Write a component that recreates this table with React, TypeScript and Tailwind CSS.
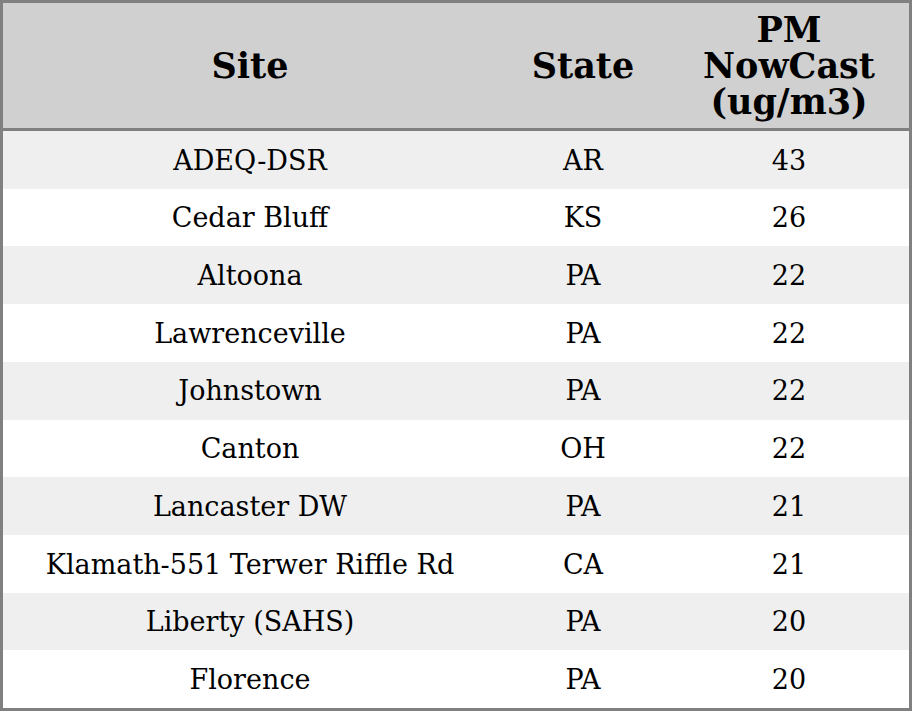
import React from "react";

const rows: [string, string, string][] = [
  ["ADEQ-DSR", "AR", "43"],
  ["Cedar Bluff", "KS", "26"],
  ["Altoona", "PA", "22"],
  ["Lawrenceville", "PA", "22"],
  ["Johnstown", "PA", "22"],
  ["Canton", "OH", "22"],
  ["Lancaster DW", "PA", "21"],
  ["Klamath-551 Terwer Riffle Rd", "CA", "21"],
  ["Liberty (SAHS)", "PA", "20"],
  ["Florence", "PA", "20"],
];

export default function App() {
  return (
    <div
      className="w-[912px] h-[711px] bg-white text-black"
      style={{ fontFamily: '"DejaVu Serif", serif' }}
    >
      <div className="w-[912px] h-[711px] border-[3px] border-[#808080] flex flex-col">
        <div className="flex h-[128px] bg-[#d0d0d0] border-b-[3px] border-[#808080] font-bold text-[35px] leading-[36px] shrink-0">
          <div className="w-[494px] flex items-center justify-center">Site</div>
          <div className="w-[172px] flex items-center justify-center">State</div>
          <div className="flex-1 flex flex-col items-center justify-center text-center">
            <div className="h-[36px] leading-[36px]">PM</div>
            <div className="h-[36px] leading-[36px]">NowCast</div>
            <div className="h-[36px] leading-[36px]">(ug/m3)</div>
          </div>
        </div>
        <div className="flex-1 flex flex-col">
          {rows.map((r, i) => (
            <div
              key={i}
              className={`flex-1 flex items-center pt-[2px] text-[27px] ${i % 2 === 0 ? "bg-[#efefef]" : "bg-white"}`}
            >
              <div className="w-[494px] text-center">{r[0]}</div>
              <div className="w-[172px] text-center">{r[1]}</div>
              <div className="flex-1 text-center">{r[2]}</div>
            </div>
          ))}
        </div>
      </div>
    </div>
  );
}
